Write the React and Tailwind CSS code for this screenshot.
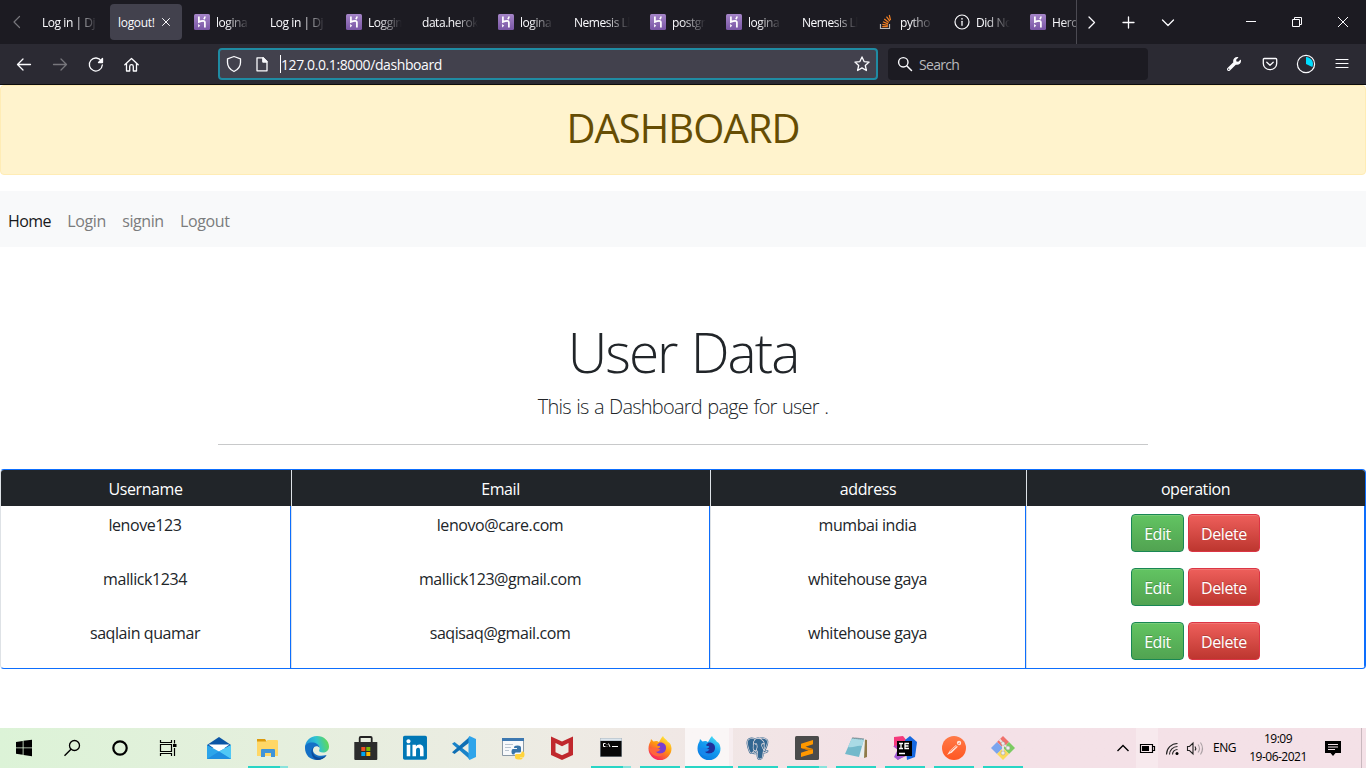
import React from "react";
import { FaLinkedin, FaWrench } from "react-icons/fa";
import { BiLogoPostgresql } from "react-icons/bi";

const stroke = { fill: "none", stroke: "currentColor", strokeLinecap: "round", strokeLinejoin: "round" };

function Heroku() {
  return (
    <svg width="16" height="16" viewBox="0 0 16 16" className="shrink-0">
      <defs>
        <linearGradient id="hk" x1="0" y1="0" x2="0" y2="1">
          <stop offset="0" stopColor="#a585c8" />
          <stop offset="1" stopColor="#7956a5" />
        </linearGradient>
      </defs>
      <rect width="16" height="16" rx="1.5" fill="url(#hk)" />
      <path d="M4.900 2.500v5.400c1.600-.7 3-1 4.300-1 1.300 0 1.700.7 1.700 1.700V13.500M11 2.500c-.1 1.100-.5 2-1.200 2.800" fill="none" stroke="#fff" strokeWidth="1.700" />
      <path d="M4.100 10l2.100 1.800-2.100 1.800z" fill="#fff" />
    </svg>
  );
}

function StackOverflow() {
  return (
    <svg width="16" height="16" viewBox="0 0 16 16" className="shrink-0">
      <path d="M2.500 10v4.500h9V10" fill="none" stroke="#bcbbbb" strokeWidth="1.200" />
      <path d="M4.200 12.600h5.600M4.300 10.300l5.600 1M4.900 7.700l5.200 2.200M6.200 5l4.500 3.500M8.500 2.600l3.300 4.600M11.300 1l1.200 5.200" stroke="#f48024" strokeWidth="1.200" fill="none" />
    </svg>
  );
}

function Info() {
  return (
    <svg width="16" height="16" viewBox="0 0 16 16" className="shrink-0 text-[#fbfbfe]">
      <circle cx="8" cy="8" r="7" {...stroke} strokeWidth="1.200" />
      <path d="M8 7.300v4" {...stroke} strokeWidth="1.300" />
      <circle cx="8" cy="4.800" r=".85" fill="currentColor" />
    </svg>
  );
}

const tabs = [
  { t: "Log in | Dj" },
  { t: "logout!", active: true },
  { t: "logina", i: Heroku },
  { t: "Log in | Dj" },
  { t: "Loggin", i: Heroku },
  { t: "data.herok" },
  { t: "logina", i: Heroku },
  { t: "Nemesis Ll" },
  { t: "postgr", i: Heroku },
  { t: "logina", i: Heroku },
  { t: "Nemesis Ll" },
  { t: "pytho", i: StackOverflow },
  { t: "Did No", i: Info },
  { t: "Hero", i: Heroku },
];

function Tab({ tab }) {
  const Icon = tab.i;
  if (tab.active)
    return (
      <div className="flex h-9 w-[72px] shrink-0 items-center rounded bg-[#42414d] pl-2">
        <span className="w-[40px] whitespace-nowrap pt-px tracking-[-0.3px]">{tab.t}</span>
        <svg width="16" height="16" viewBox="0 0 16 16" className="text-[#fbfbfe]">
          <path d="M4.500 4.500l7 7M11.500 4.500l-7 7" {...stroke} strokeWidth="1" />
        </svg>
      </div>
    );
  return (
    <div className="flex h-9 w-[72px] shrink-0 items-center gap-1.5 px-2">
      {Icon && <Icon />}
      <span className="min-w-0 flex-1 overflow-hidden whitespace-nowrap pt-px tracking-[-0.45px] [mask-image:linear-gradient(to_left,transparent,black_24px)]">
        {tab.t}
      </span>
    </div>
  );
}

function TabBar() {
  return (
    <div className="flex h-11 items-center bg-[#1c1b22] text-[12px] text-[#fbfbfe]">
      <div className="flex w-[34px] justify-center">
        <svg width="16" height="16" viewBox="0 0 16 16" className="text-[#77767c]">
          <path d="M10.500 2.500L5 8l5.500 5.500" {...stroke} strokeWidth="1.200" />
        </svg>
      </div>
      <div className="flex h-full w-[1043px] items-center gap-1 overflow-hidden border-r border-[#4b4a52]">
        {tabs.map((t, i) => (
          <Tab key={i} tab={t} />
        ))}
      </div>
      <svg width="289" height="44" viewBox="1077 0 289 44">
        <g {...stroke} strokeWidth="1.300">
          <path d="M1089 17l5.500 5.500-5.500 5.500" />
          <path d="M1123 22.500h11M1128.500 17v11" />
          <path d="M1162.500 20l5.500 5.500 5.500-5.500" />
        </g>
        <g fill="none" stroke="currentColor" strokeWidth="1">
          <path d="M1246 21.500h10" />
          <path d="M1292.500 19.500h7v7h-7zM1294.500 19.500v-2h7v7h-2" />
          <path d="M1338 17l10 10M1348 17l-10 10" />
        </g>
      </svg>
    </div>
  );
}

function Toolbar() {
  return (
    <div className="flex h-[41px] items-center border-b border-[#0c0c0d] bg-[#2b2a33] text-[14px] text-[#fbfbfe]">
      <svg width="218" height="40" viewBox="0 44 218 40" className="shrink-0">
        <g {...stroke} strokeWidth="1.300">
          <path d="M30.500 64.500h-13M23 59l-5.500 5.500L23 70" />
          <path d="M53.500 64.500h13M61 59l5.500 5.500L61 70" className="text-[#77767c]" />
          <path d="M101.300 61a6.500 6.500 0 1 0 1 4" />
          <path d="M102.500 58.500v4h-4z" fill="currentColor" />
          <path d="M124.800 64.800l6.700-6.300 6.700 6.300M126.500 63.500v7.500h3.200v-4.500a1.800 1.800 0 0 1 3.600 0v4.500h3.200v-7.500" />
        </g>
      </svg>
      <div className="flex h-8 w-[660px] items-center rounded border-2 border-[#1f8ba3] bg-[#42414d] px-1.5">
        <svg width="54" height="20" viewBox="226 54 54 20" className="text-[#fbfbfe]">
          <g {...stroke} strokeWidth="1.300">
            <path d="M234 56.500l6.500 2.300v3.700c0 4-2.300 7-6.500 9-4.200-2-6.500-5-6.500-9v-3.700z" />
            <path d="M257 57.800h6l4 4v9h-10zM263 57.800v4h4" />
            <path d="M263 57.800v4h4z" fill="currentColor" />
          </g>
        </svg>
        <span className="h-[18px] w-px bg-white" />
        <span className="flex-1 pt-px tracking-[-0.4px]">127.0.0.1:8000/dashboard</span>
        <svg width="16" height="16" viewBox="0 0 16 16">
          <path d="M8 .900l2.100 4.700 5 .500-3.800 3.400 1.100 5L8 11.900l-4.400 2.600 1.100-5L.900 6.100l5-.500z" {...stroke} strokeWidth="1.300" />
        </svg>
      </div>
      <div className="ml-2.5 flex h-8 w-[260px] items-center rounded bg-[#1c1b22] pl-[9px]">
        <svg width="16" height="16" viewBox="0 0 16 16">
          <path d="M10 10l4.500 4.500" {...stroke} strokeWidth="1.500" />
          <circle cx="6.300" cy="6.300" r="4.700" {...stroke} strokeWidth="1.400" />
        </svg>
        <span className="ml-1.5 pt-px tracking-[-0.7px] text-[#b9b9bd]">Search</span>
      </div>
      <div className="ml-auto flex items-center pr-4">
        <FaWrench className="mr-[21px] h-[14px] w-[14px]" />
        <svg width="16" height="16" viewBox="0 0 16 16">
          <g {...stroke} strokeWidth="1.300">
            <path d="M2.300 2.500h11.400a1 1 0 0 1 1 1V7.500a6.700 6.200 0 0 1-13.400 0V3.500a1 1 0 0 1 1-1z" />
            <path d="M4.800 6.300L8 9.300l3.200-3" />
          </g>
        </svg>
        <svg width="20" height="20" viewBox="0 0 20 20" className="ml-[18px]">
          <circle cx="10" cy="10" r="8.600" {...stroke} strokeWidth="1.200" />
          <path d="M10 10V3a7 7 0 0 1 6.300 10z" fill="#00ddff" />
        </svg>
        <svg width="16" height="16" viewBox="0 0 16 16" className="ml-[18px]">
          <path d="M2 3.500h12M2 7.500h12M2 11.500h12" {...stroke} strokeWidth="1.200" />
        </svg>
      </div>
    </div>
  );
}

const rows = [
  ["lenove123", "lenovo@care.com", "mumbai india"],
  ["mallick1234", "mallick123@gmail.com", "whitehouse gaya"],
  ["saqlain quamar", "saqisaq@gmail.com", "whitehouse gaya"],
];

const btn =
  "flex h-[38px] items-center justify-center rounded border pt-px text-white [text-shadow:0_-1px_0_rgba(0,0,0,0.2)] shadow-[inset_0_1px_0_rgba(255,255,255,0.15)]";

const columns = "grid grid-cols-[291px_419px_316px_338px]";

function Page() {
  return (
    <main className="flex h-[643px] flex-col bg-white text-[16px] text-[#212529]">
      <header className="flex h-[90px] shrink-0 justify-center rounded border border-[#ffecb5] bg-[#fff3cd] pt-[18px]">
        <h1 className="text-[40px] leading-[48px] tracking-[-0.95px] text-[#664d03]">DASHBOARD</h1>
      </header>
      <nav className="mt-4 flex h-14 shrink-0 items-center gap-[16.3px] bg-[#f8f9fa] px-2 pt-[3px] tracking-[-0.4px] text-[#7b7c7d]">
        <a className="text-[#17181a] tracking-[-0.55px]">Home</a>
        <a>Login</a>
        <a>signin</a>
        <a>Logout</a>
      </nav>
      <section className="mx-auto flex w-[930px] flex-col items-center pt-[71px]">
        <h2 className="text-[55px] leading-[67px] font-light tracking-[-2px] [word-spacing:2px]">User Data</h2>
        <p className="mt-[7px] text-[20px] leading-[30px] font-light tracking-[-0.78px] [word-spacing:1px]">
          This is a Dashboard page for user .
        </p>
        <hr className="mt-[22px] w-full border-[#c8c9ca]" />
      </section>
      <div className="mt-6 h-[200px] overflow-hidden rounded border border-[#0d6efd] border-l-[#dee2e6] text-center tracking-[-0.42px]">
        <div className={columns + " h-9 bg-[#212529] leading-[39px] text-white"}>
          <div className="border-r border-[#dee2e6] pr-px">Username</div>
          <div className="border-r border-[#dee2e6] pr-px">Email</div>
          <div className="border-r border-[#dee2e6] pr-px">address</div>
          <div className="pr-px">operation</div>
        </div>
        {rows.map((r) => (
          <div key={r[0]} className={columns + " h-[54px]"}>
            {r.map((c) => (
              <div key={c} className="border-r border-[#dee2e6] pt-[7px] pr-[2px] leading-[25px] shadow-[inset_-1px_0_0_#0d6efd]">
                {c}
              </div>
            ))}
            <div className="flex justify-center gap-1 pt-2 pr-px shadow-[inset_-1px_0_0_#0d6efd]">
              <button className={btn + " w-[53px] border-[#198754] bg-linear-to-b from-[#62c462] to-[#51a351]"}>Edit</button>
              <button className={btn + " w-[72px] border-[#dc3545] bg-linear-to-b from-[#ee5f5b] to-[#bd362f]"}>Delete</button>
            </div>
          </div>
        ))}
      </div>
    </main>
  );
}

const Pic = ({ children }) => (
  <svg width="24" height="24" viewBox="0 0 24 24">
    {children}
  </svg>
);

function Mail() {
  return (
    <Pic>
      <path d="M0 9L12 1l12 8v3H0z" fill="#0a55a5" />
      <path d="M1.500 8.500h21L12 16z" fill="#fff" />
      <path d="M0 9l12 6.500L24 9v14H0z" fill="#2ca5ea" />
      <path d="M24 9v14L12 15.500z" fill="#50c8f5" />
      <path d="M0 23l12-7.500L24 23z" fill="#1f8fe0" />
    </Pic>
  );
}

function Folder() {
  return (
    <Pic>
      <path d="M1 3h8l2 3H1z" fill="#dc9a0c" />
      <path d="M1 5.500h9l1.500-1.500H21a1 1 0 0 1 1 1v15H1z" fill="#ffd766" />
      <path d="M5 21v-7a1 1 0 0 1 1-1h12a1 1 0 0 1 1 1v7h-4v-4h-6v4z" fill="#3f94d8" />
    </Pic>
  );
}

function Edge() {
  return (
    <Pic>
      <defs>
        <linearGradient id="eg" x1="0" y1=".5" x2="1" y2=".3">
          <stop offset="0" stopColor="#2091dc" />
          <stop offset=".5" stopColor="#2fc3d2" />
          <stop offset="1" stopColor="#66db4a" />
        </linearGradient>
      </defs>
      <path d="M0 12C0 5 5 0 12 0s12 5 12 10.500c0 4-3 6-6 6s-4.500-1-3.800-2.500c1.500-3-.5-5.500-3.700-5.500C5 8.500 0 12 0 12z" fill="url(#eg)" />
      <path d="M0 12C0 8 3.500 6.500 7 6.500s7.500 2 7.700 5.500c-2-3-6.200-2-6.700 1.500-.5 4 4 8 13.500 5.500C19 22.500 16 24 12 24 5 24 0 19 0 12z" fill="#1470c6" />
      <path d="M8.700 11c-3 4 0 10.500 5.500 10.700 3 .1 5.500-1 7.500-2.700-2 3.500-5.500 5-9.700 5C6.500 22.500 4.500 14 8.700 11z" fill="#0d4b99" />
    </Pic>
  );
}

function Store() {
  return (
    <Pic>
      <path d="M5.700 7V2a1 1 0 0 1 1-1h10a1 1 0 0 1 1 1v5" fill="none" stroke="#222" strokeWidth="1.800" />
      <path d="M.300 6h23v17a1 1 0 0 1-1 1h-21a1 1 0 0 1-1-1z" fill="#2c2c2c" />
      <path d="M7.300 11h4v4h-4z" fill="#f25022" />
      <path d="M12.300 11h4v4h-4z" fill="#7fba00" />
      <path d="M7.300 16h4v4h-4z" fill="#00a4ef" />
      <path d="M12.300 16h4v4h-4z" fill="#ffb900" />
    </Pic>
  );
}

function LinkedIn() {
  return (
    <div className="flex h-6 w-6 items-center justify-center rounded bg-white">
      <FaLinkedin className="h-[27.4px] w-6 shrink-0 text-[#0077b5]" />
    </div>
  );
}

function Code() {
  return (
    <Pic>
      <path d="M0 7.700L2.500 6 18 18v5.500z" fill="#1a83c9" />
      <path d="M0 16.300L2.500 18 18 6V.5z" fill="#0f6fb4" />
      <path d="M17.500 0L24 3v18l-6.500 3-1-1.500V1.500z" fill="#2fa4ea" />
    </Pic>
  );
}

function Idle() {
  return (
    <Pic>
      <path d="M1.500 2.500h21v17h-21z" fill="#f7f9fb" stroke="#8a99a6" />
      <path d="M1 2h22v3H1z" fill="#3d78b0" />
      <path d="M4 8.500h8M4 11.500h6M4 14.500h4" stroke="#b9c4cf" />
      <path d="M16.500 9.500c3 0 3.500 1 3.500 2.500v3c0 1-.6 1.500-1.500 1.500H15c-1 0-1.500.7-1.500 2H12c-2 0-2-5.500 0-5.500h4V12h-3c0-1.700.7-2.500 3.500-2.500z" fill="#3775a9" />
      <path d="M17.500 23.500c-3 0-3.500-1-3.500-2.500v-1.500c0-1 .6-1.500 1.500-1.500H19c1 0 1.500-.7 1.500-2.500H22c2 0 2 6 0 6h-3v.5h2.500c0 1-.7 1.500-4 1.500z" fill="#ffd43b" />
    </Pic>
  );
}

function McAfee() {
  return (
    <Pic>
      <path d="M1 .500l11 5L23 .500V19l-11 5L1 19zM5.500 7v9.300L12 19.200l6.500-2.900V7L12 10.300z" fill="#c0282d" fillRule="evenodd" />
    </Pic>
  );
}

function Terminal() {
  return (
    <Pic>
      <path d="M1 2h22v19H1z" fill="#a8b3bb" />
      <path d="M1.500 2.500h21v2h-21z" fill="#dce6ee" />
      <path d="M1.500 5h21v15.500h-21z" fill="#080808" />
      <path d="M6.500 7.500H4.500v3h2M8 8v.5M8 10v.5M9.500 7.500l1.500 3.500M13 10.500h6" fill="none" stroke="#fff" />
    </Pic>
  );
}

function Firefox({ dev }) {
  const id = dev ? "fxd" : "fx";
  return (
    <Pic>
      <defs>
        <linearGradient id={id} x1=".8" y1="0" x2=".2" y2="1">
          <stop offset="0" stopColor={dev ? "#50e6f5" : "#fff044"} />
          <stop offset=".45" stopColor={dev ? "#149cf0" : "#ff980e"} />
          <stop offset="1" stopColor={dev ? "#0878e0" : "#f5156c"} />
        </linearGradient>
      </defs>
      <path d="M15 0c1 2.500 3.500 3.500 5 6 2 0 3.500 4 3.500 6.500a11.500 11.500 0 0 1-23 0C.500 9 1.500 7 2.500 5.500L3 3l2.500 2.500L8 5c1.500 0 2 .5 3 1 1.500-2 2-4 4-6z" fill={"url(#" + id + ")"} />
      <path d="M11.500 6.500c4-.5 7 2 6.500 6s-4 5.500-7 5c-3-.5-4.500-3-4-5.500 1 1 2.500 1 3.500.5 1.500-1 2.500-1.500 1-2.500-1.500 0-2.500-.5-2.500-1z" fill={dev ? "#20309a" : "#7a3ed0"} />
      <path d="M1 11c2 3 4.500 0 6.500.5 2 .5 3.500 2.500 5 1.500-1 2.500-3 3-5 2.500 1.500 2.500 6 3 8.500.5-1 3.500-4 5-7.500 4C4 19 1 16 1 11z" fill={dev ? "#1688ec" : "#ff663c"} />
    </Pic>
  );
}

function Postgres() {
  return (
    <div className="flex h-6 w-6 items-center justify-center">
      <BiLogoPostgresql className="h-[27px] w-[27px] shrink-0 text-[#336791]" />
    </div>
  );
}

function Sublime() {
  return (
    <Pic>
      <rect width="24" height="24" rx="1.500" fill="#4b4b4b" />
      <path d="M18 4v4.300l-7.500 2.400L18 13v4.500L6 21v-4.300l7.500-2.400L6 12V7.700z" fill="#ff9800" />
      <path d="M6 12l12 1v1l-4.500.3z" fill="#d87900" />
    </Pic>
  );
}

function Notepad() {
  return (
    <Pic>
      <path d="M19 3l4 1v17l-3 1z" fill="#8f7b4a" />
      <path d="M9 2l12 1-1 19-4-1z" fill="#e8eef0" />
      <path d="M8 2l12 1-5 18-14-3z" fill="#73b9cb" />
      <path d="M8 2l12 1-2 7c-5-1-8 2-14 1z" fill="#a9dae5" />
      <path d="M8.500 2l11 1" stroke="#59666b" strokeDasharray="1 1" strokeWidth="1.500" />
    </Pic>
  );
}

function Idea() {
  return (
    <Pic>
      <path d="M1 1l9-1 4 5-4 9-9-3z" fill="#f5397c" />
      <path d="M12 4l5-4 7 6-2 15-8 3z" fill="#1668e0" />
      <path d="M0 10l6 5-2 9 9-4V8z" fill="#b84bc4" />
      <path d="M4.500 14L1 21l4 3 8-5z" fill="#a45bd6" />
      <path d="M4 5h15v15H4z" fill="#000" />
      <path d="M6 7.500h4M6 12.500h4M8 7.500v5M16 7.500h-4v5h4M12 10h3.500M6 17.500h6" fill="none" stroke="#fff" strokeWidth="1.300" />
    </Pic>
  );
}

function Postman() {
  return (
    <Pic>
      <defs>
        <linearGradient id="pm" x1="0" y1="0" x2="0" y2="1">
          <stop offset="0" stopColor="#ff7a48" />
          <stop offset="1" stopColor="#ff5722" />
        </linearGradient>
      </defs>
      <circle cx="12" cy="12" r="12" fill="url(#pm)" />
      <path d="M5 19l3-4.500 6-5.500 1.800 1.800-5.800 5.700z" fill="#ffe4da" />
      <path d="M8 15.500l7-6" stroke="#ff6c37" strokeWidth=".8" />
      <circle cx="17" cy="7" r="2.200" fill="#ffe4da" />
      <path d="M15.500 8.300l2.500-1.500" stroke="#ff6c37" strokeWidth=".8" />
    </Pic>
  );
}

function Git() {
  return (
    <Pic>
      <path d="M12 0l6 6-6 6-6-6z" fill="#f0716c" />
      <path d="M6 6l6 6-6 6-6-6z" fill="#7ba5ee" />
      <path d="M18 6l6 6-6 6-6-6z" fill="#7ccb62" />
      <path d="M12 12l6 6-6 6-6-6z" fill="#fbd95b" />
      <path d="M8.500 3.500l3.500 4v10M12 8l5 4" fill="none" stroke="#e9e1e1" strokeWidth="2" />
      <g fill="#eee" stroke="#a09898" strokeWidth=".5">
        <circle cx="12" cy="7.500" r="1.800" />
        <circle cx="12" cy="17" r="2" />
        <circle cx="17" cy="12" r="2" />
      </g>
    </Pic>
  );
}

const apps = [
  { c: Mail },
  { c: Folder, run: "stack" },
  { c: Edge },
  { c: Store },
  { c: LinkedIn },
  { c: Code },
  { c: Idle },
  { c: McAfee },
  { c: Terminal, run: "stack" },
  { c: () => <Firefox />, run: "one" },
  { c: () => <Firefox dev />, run: "active" },
  { c: Postgres, run: "one" },
  { c: Sublime, run: "stack" },
  { c: Notepad, run: "one" },
  { c: Idea, run: "one" },
  { c: Postman, run: "one" },
  { c: Git, run: "one" },
];

function AppButton({ a }) {
  const C = a.c;
  const active = a.run === "active";
  return (
    <div
      className={
        "flex h-10 flex-col items-center justify-between pt-2 " +
        (active ? "ml-px w-[48px] bg-linear-to-r from-[#faf6f6] from-[44px] via-[#f7eef0] via-[44px] to-[#f7eef0]" : "w-[49px]")
      }
    >
      <C />
      <div className={"flex h-[2px] " + (active ? "w-full" : "w-10")}>
        {a.run && <span className="flex-1 bg-[#28d5c5]" />}
        {a.run === "stack" && <span className="w-2 bg-[#88e3dc]" />}
      </div>
    </div>
  );
}

function Taskbar() {
  return (
    <footer className="flex h-10 bg-linear-to-r from-[#dcf3d7] via-[#eeebe4] via-42% to-[#f4e1e7] to-65% text-black">
      <svg width="194" height="40" viewBox="0 728 194 40" className="shrink-0">
        <path d="M16 742l6.700-1v6.500H16zM23.500 740.800L32 739.700v7.800h-8.500zM16 748.300h6.700v6.500l-6.700-1zM23.500 748.300H32v7.900l-8.500-1.200z" />
        <g fill="none" stroke="#000">
          <circle cx="74.500" cy="745.500" r="5" strokeWidth="1.300" />
          <path d="M71 749.200l-6.500 6.500" strokeWidth="1.400" />
          <circle cx="120" cy="748" r="6.700" strokeWidth="2.200" />
          <path d="M160.500 740v2.500h11V740M160.500 756v-2.500h11v2.500M160.500 744.500h11v7h-11zM174.500 740v3.500M174.500 748v8" strokeWidth="1.200" />
        </g>
        <path d="M173 744h3.500v3H173z" />
      </svg>
      <div className="flex">
        {apps.map((a, i) => (
          <AppButton key={i} a={a} />
        ))}
      </div>
      <div className="ml-auto flex w-[325px] items-center text-[12px]">
        <svg width="170" height="40" viewBox="1041 728 170 40" className="shrink-0">
          <path d="M1136 728h22v40h-22z" fill="#f7e9ed" />
          <path d="M1117.500 751l5.500-5.500 5.500 5.500" fill="none" stroke="#000" strokeWidth="1.400" />
          <path d="M1140.500 744.500h12v8h-12zM1153 746.500h1.500v4h-1.500" fill="none" stroke="#000" strokeWidth="1.200" />
          <path d="M1142 746h7v5h-7z" />
          <g fill="none" stroke="#222" strokeWidth="1.100">
            <path d="M1166.500 754.500a11 11 0 0 1 11-11M1169.500 754.500a8 8 0 0 1 8-8M1172.500 754.500a5 5 0 0 1 5-5" />
            <path d="M1187.500 746.500h2l3.500-3.500v11l-3.500-3.500h-2zM1195 746.500q1.500 2 0 4" />
            <path d="M1198 744.500q3 4 0 8M1200.500 742.500q4 6 0 12" stroke="#aaa0a4" />
          </g>
          <circle cx="1177" cy="753.500" r="1.500" />
        </svg>
        <span className="ml-[2px] w-[24px] whitespace-nowrap tracking-[-0.5px]">ENG</span>
        <span className="ml-[9px] w-[64px] text-center leading-[18px] tracking-[-0.5px] whitespace-nowrap">
          19:09
          <br />
          19-06-2021
        </span>
        <svg width="18" height="18" viewBox="0 0 18 18" className="ml-[14px]">
          <path d="M1 2h16v12h-5.500L9 17l-2.500-3H1z" />
          <path d="M4 5.500h10M4 8h10M4 10.500h7" stroke="#f4e1e7" />
        </svg>
        <span className="mr-1 ml-auto h-full w-px bg-[#c8b8be]" />
      </div>
    </footer>
  );
}

export default function App() {
  return (
    <div className="h-[768px] w-[1366px] overflow-hidden font-['Open_Sans','Noto_Sans',sans-serif]">
      <TabBar />
      <Toolbar />
      <Page />
      <Taskbar />
    </div>
  );
}
